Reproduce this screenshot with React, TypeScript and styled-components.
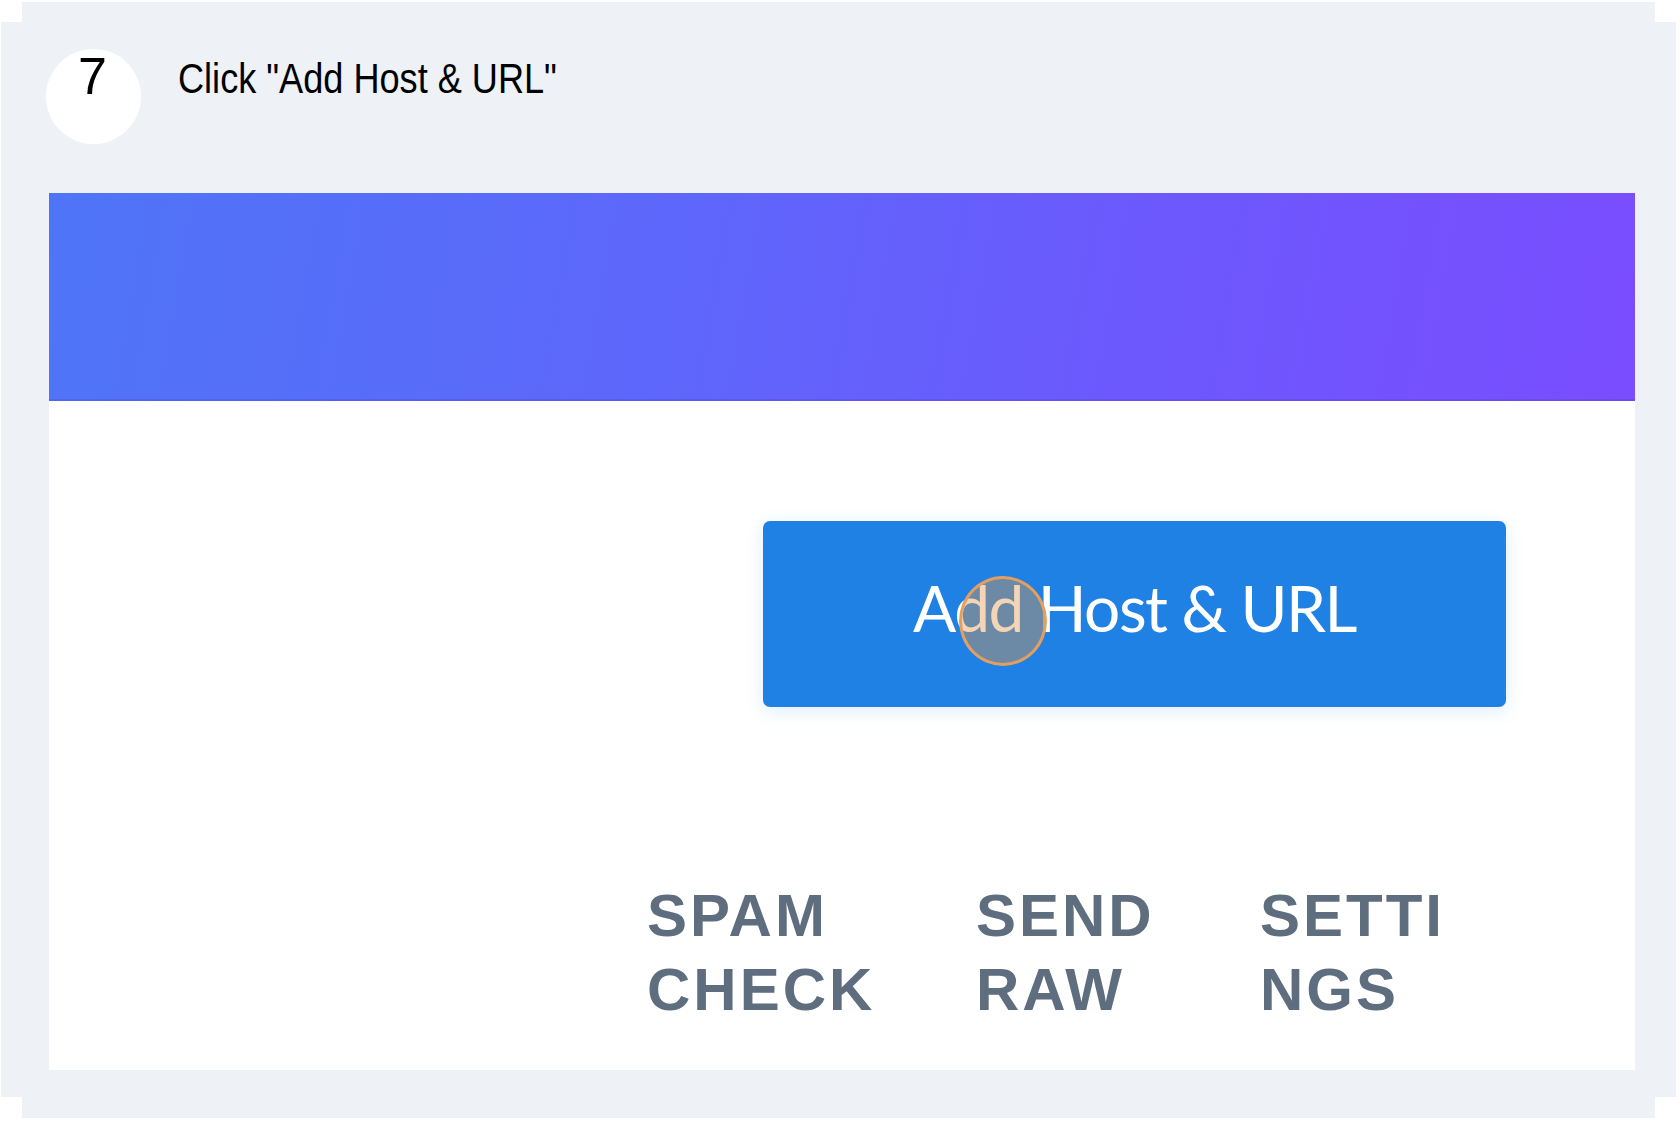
import React from "react";
import styled, { createGlobalStyle } from "styled-components";

const Global = createGlobalStyle`
  html, body { margin: 0; padding: 0; background: #ffffff; }
  body { font-family: "Liberation Sans", Arial, sans-serif; }
`;

const Frame = styled.div`
  box-sizing: border-box;
  margin: 2px 0 0 1px;
  width: 1675px;
  height: 1116px;
  background: #eef2f7;
  padding: 47px 0 0 0;
  display: flex;
  flex-direction: column;
  clip-path: polygon(
    21px 0, 1654px 0, 1654px 20px, 1675px 20px, 1675px 1095px, 1654px 1095px,
    1654px 1116px, 21px 1116px, 21px 1095px, 0 1095px, 0 20px, 21px 20px
  );
`;

const Header = styled.div`
  display: flex;
  align-items: flex-start;
  padding-left: 45px;
  height: 95px;
`;

const StepBadge = styled.div`
  flex: none;
  width: 95px;
  height: 95px;
  border-radius: 50%;
  background: #ffffff;
  display: flex;
  justify-content: center;
  align-items: flex-start;
  padding-top: 1px;
  box-sizing: border-box;
`;

const StepNumber = styled.span`
  display: inline-block;
  font-family: "Liberation Sans", Arial, sans-serif;
  font-size: 52px;
  line-height: 1;
  color: #000;
  margin-left: -2px;
`;

const Title = styled.div`
  margin: 9px 0 0 37px;
  font-family: "Liberation Sans", Arial, sans-serif;
  font-size: 42px;
  line-height: 1;
  color: #000;
  white-space: nowrap;
  transform: scaleX(0.86);
  transform-origin: left center;
`;

const Panel = styled.div`
  margin: 49px 0 0 48px;
  width: 1586px;
  display: flex;
  flex-direction: column;
`;

const Banner = styled.div`
  height: 208px;
  background: linear-gradient(100deg, #4f75f7 0%, #5d67fb 38%, #6d58fd 70%, #7a4dfe 100%);
  box-shadow: inset 0 -2px 0 rgba(80, 60, 200, 0.25);
`;

const Body = styled.div`
  height: 669px;
  background: #ffffff;
  display: flex;
  flex-direction: column;
  padding-top: 120px;
  box-sizing: border-box;
`;

const ButtonRow = styled.div`
  display: flex;
  justify-content: flex-end;
  padding-right: 129px;
`;

const AddButton = styled.div`
  position: relative;
  width: 743px;
  height: 186px;
  border-radius: 7px;
  background: #1e81e3;
  box-shadow: 0 4px 18px rgba(30, 129, 227, 0.14);
  display: flex;
  align-items: center;
  justify-content: center;
  color: #ffffff;
  font-family: Lato, "Liberation Sans", Arial, sans-serif;
  font-size: 64px;
  font-weight: 400;
  letter-spacing: -1.5px;
  padding-bottom: 14px;
  box-sizing: border-box;
`;

const ClickMarker = styled.div`
  position: absolute;
  left: 196px;
  top: 55px;
  width: 88px;
  height: 90px;
  border-radius: 50%;
  box-sizing: border-box;
  border: 3px solid #e39e62;
  background: rgba(226, 150, 72, 0.4);
`;

const Tabs = styled.div`
  margin: 172px 0 0 598px;
  display: grid;
  grid-template-columns: 329px 284px auto;
`;

const Tab = styled.div`
  font-family: "Liberation Sans", Arial, sans-serif;
  font-weight: 700;
  font-size: 60px;
  line-height: 74px;
  letter-spacing: 3px;
  color: #5e6e7f;
  white-space: nowrap;
`;

export default function App() {
  return (
    <>
      <Global />
      <Frame>
        <Header>
          <StepBadge>
            <StepNumber>7</StepNumber>
          </StepBadge>
          <Title>Click "Add Host &amp; URL"</Title>
        </Header>
        <Panel>
          <Banner />
          <Body>
            <ButtonRow>
              <AddButton>
                Add Host &amp; URL
                <ClickMarker />
              </AddButton>
            </ButtonRow>
            <Tabs>
              <Tab>
                SPAM
                <br />
                CHECK
              </Tab>
              <Tab>
                SEND
                <br />
                RAW
              </Tab>
              <Tab>
                SETTI
                <br />
                NGS
              </Tab>
            </Tabs>
          </Body>
        </Panel>
      </Frame>
    </>
  );
}
